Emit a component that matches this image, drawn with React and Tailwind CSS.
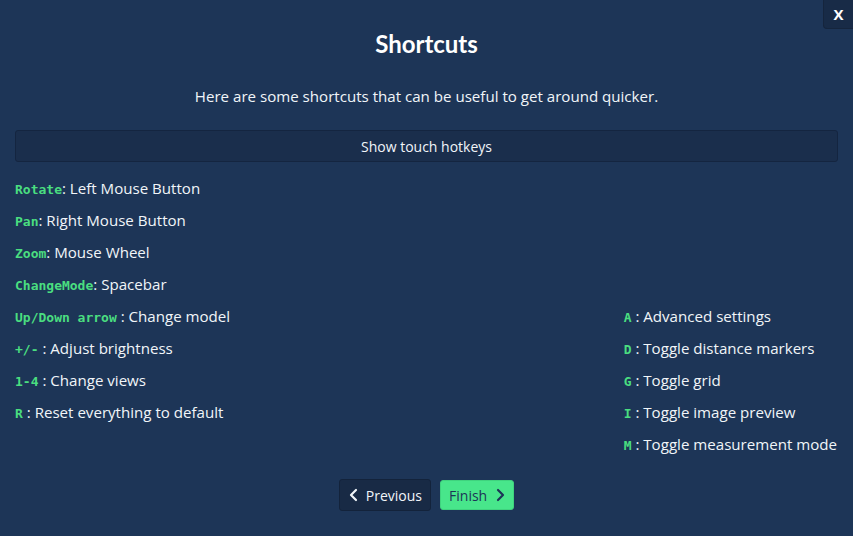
import React from "react";

const left = [
  ["Rotate", ": Left Mouse Button"],
  ["Pan", ": Right Mouse Button"],
  ["Zoom", ": Mouse Wheel"],
  ["ChangeMode", ": Spacebar"],
  ["Up/Down arrow", " : Change model"],
  ["+/-", " : Adjust brightness"],
  ["1-4", " : Change views"],
  ["R", " : Reset everything to default"],
];
const right = [
  ["A", " : Advanced settings"],
  ["D", " : Toggle distance markers"],
  ["G", " : Toggle grid"],
  ["I", " : Toggle image preview"],
  ["M", " : Toggle measurement mode"],
];

function Row({ k, v }) {
  return (
    <div className="h-[32px] leading-[32px] whitespace-pre">
      <span className="font-['DejaVu_Sans_Mono',monospace] font-bold text-[13px] text-[#4ade80]">{k}</span>
      <span>{v}</span>
    </div>
  );
}

export default function App() {
  return (
    <div className="relative w-[853px] h-[536px] bg-[#1d3557] text-[#f1f5f9] font-['Open_Sans',sans-serif] text-[15.1px] overflow-hidden">
      <button className="absolute top-0 right-0 w-[30px] h-[29px] bg-[#182b47] rounded-bl-[4px] border-l border-b border-[#15253d] flex items-center justify-center text-white font-bold text-[15px] font-['Open_Sans',sans-serif]">
        X
      </button>
      <div className="flex flex-col px-[15px]">
        <h1 className="text-center font-['Lato',sans-serif] font-bold text-[24px] leading-[30px] mt-[29px] text-white">Shortcuts</h1>
        <p className="text-center leading-[22px] mt-[26px]">Here are some shortcuts that can be useful to get around quicker.</p>
        <button className="mt-[23px] h-[32px] w-full bg-[#1a2e4c] border border-[#142540] rounded-[3px] text-[14px] text-[#f1f5f9]">
          Show touch hotkeys
        </button>
        <div className="flex justify-between mt-[10px]">
          <div className="flex flex-col">
            {left.map(([k, v]) => <Row key={k} k={k} v={v} />)}
          </div>
          <div className="flex flex-col pt-[128px] pr-[1px]">
            {right.map(([k, v]) => <Row key={k} k={k} v={v} />)}
          </div>
        </div>
        <div className="flex justify-center gap-[9px] mt-[19px] text-[14px]">
          <button className="h-[32px] px-[8px] flex items-center gap-[6px] bg-[#182a45] border border-[#13233b] rounded-[3px] text-[#f1f5f9]">
            <svg width="12" height="14" viewBox="0 0 12 14" fill="none" stroke="currentColor" strokeWidth="2.2" strokeLinecap="round" strokeLinejoin="round"><path d="M8 2 L3 7 L8 12" /></svg>
            <span>Previous</span>
          </button>
          <button className="h-[30px] mt-[1px] px-[8px] flex items-center gap-[8px] bg-[#48e68b] border border-[#3fd37e] rounded-[3px] text-[#1d3557]">
            <span>Finish</span>
            <svg width="10" height="14" viewBox="0 0 10 14" fill="none" stroke="currentColor" strokeWidth="2.2" strokeLinecap="round" strokeLinejoin="round"><path d="M3 2 L8 7 L3 12" /></svg>
          </button>
        </div>
      </div>
    </div>
  );
}
